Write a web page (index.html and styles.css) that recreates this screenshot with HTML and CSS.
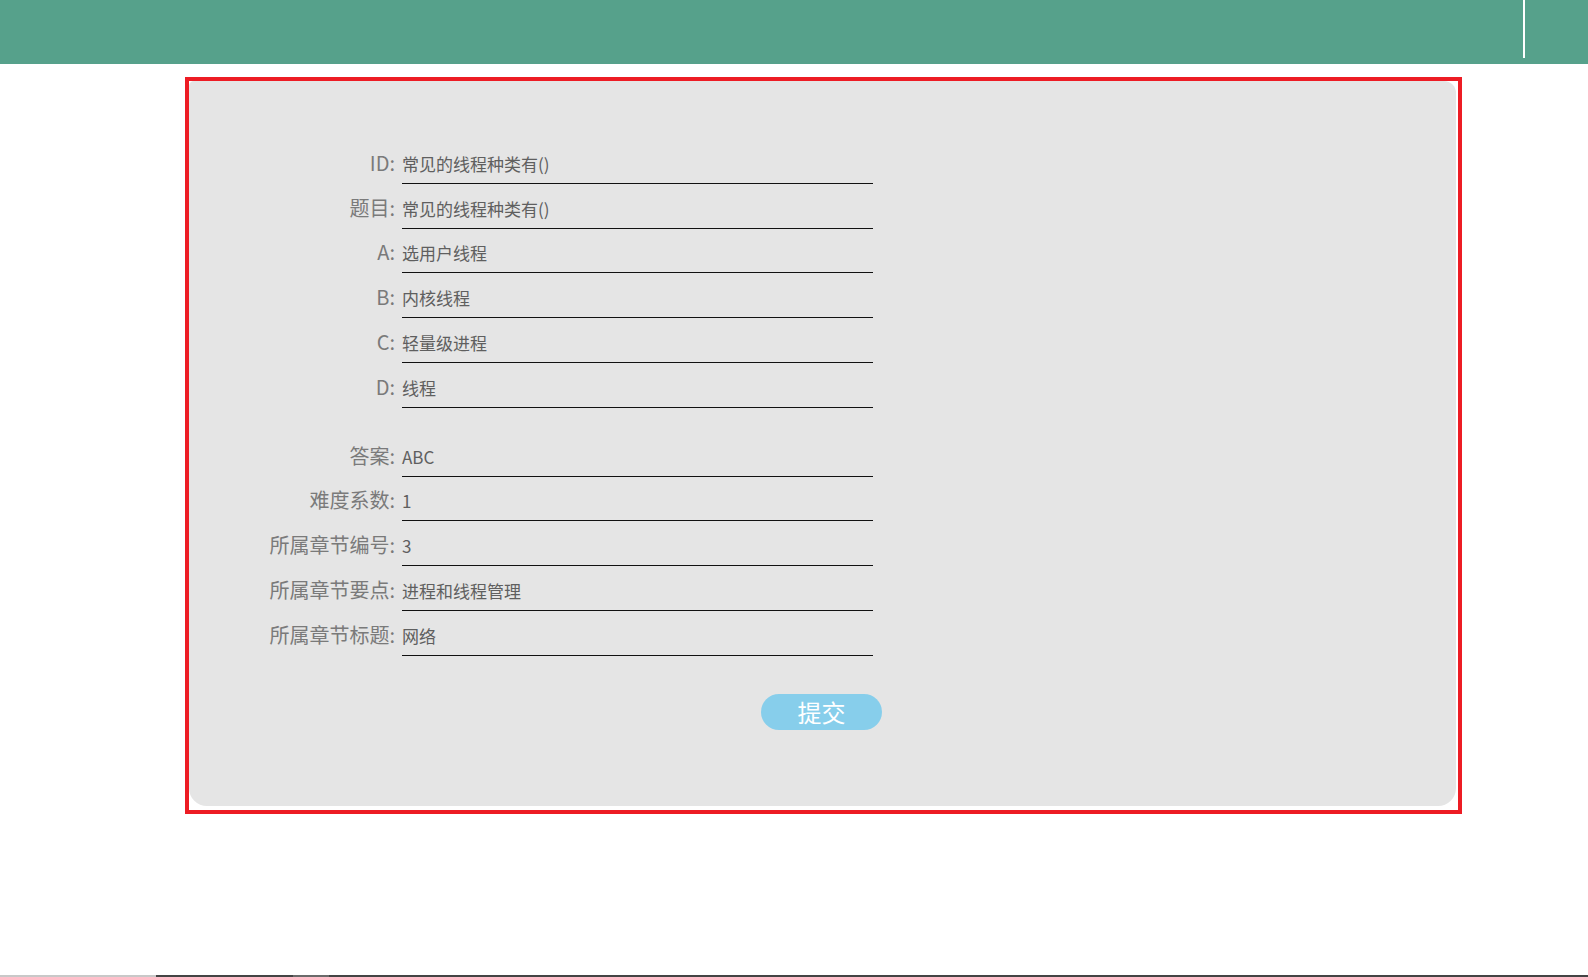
FILE: index.html
```html
<!DOCTYPE html>
<html lang="zh-CN">
<head>
<meta charset="utf-8">
<title>题目编辑</title>
<link rel="stylesheet" href="styles.css">
</head>
<body>
<header class="topbar">
  <div class="topbar-divider"></div>
</header>
<main class="main">
  <div class="frame">
    <form class="panel">
      <div class="group">
        <div class="row"><span class="label">ID:</span><div class="field">常见的线程种类有()</div></div>
        <div class="row"><span class="label">题目:</span><div class="field">常见的线程种类有()</div></div>
        <div class="row"><span class="label">A:</span><div class="field">选用户线程</div></div>
        <div class="row"><span class="label">B:</span><div class="field">内核线程</div></div>
        <div class="row"><span class="label">C:</span><div class="field">轻量级进程</div></div>
        <div class="row"><span class="label">D:</span><div class="field">线程</div></div>
      </div>
      <div class="group group-second">
        <div class="row"><span class="label">答案:</span><div class="field">ABC</div></div>
        <div class="row"><span class="label">难度系数:</span><div class="field">1</div></div>
        <div class="row"><span class="label">所属章节编号:</span><div class="field">3</div></div>
        <div class="row"><span class="label">所属章节要点:</span><div class="field">进程和线程管理</div></div>
        <div class="row"><span class="label">所属章节标题:</span><div class="field">网络</div></div>
      </div>
      <div class="actions">
        <button type="button" class="submit">提交</button>
      </div>
    </form>
  </div>
</main>
<footer class="bottom-strip">
  <div class="strip-light"></div>
  <div class="strip-dark"></div>
  <div class="strip-mid"></div>
  <div class="strip-dark strip-fill"></div>
</footer>
</body>
</html>
```
FILE: styles.css
```css
html, body {
  margin: 0;
  padding: 0;
}
body {
  background: #ffffff;
  font-family: "Noto Sans CJK SC", "Noto Sans", sans-serif;
  display: flex;
  flex-direction: column;
  min-height: 100vh;
}
.topbar {
  height: 64px;
  background: #56a18b;
  display: flex;
  justify-content: flex-end;
}
.topbar-divider {
  width: 2px;
  height: 58px;
  background: #ffffff;
  margin-right: 63px;
}
.main {
  padding: 13px 0 0 185px;
}
.frame {
  width: 1267px;
  border: 4px solid #ed1c24;
  padding: 0 2px 4px 0;
  background: #ffffff;
}
.panel {
  background: #e5e5e5;
  height: 725px;
  box-sizing: border-box;
  border-radius: 5px 12px 18px 18px;
  padding: 58px 0 0 56px;
  display: flex;
  flex-direction: column;
}
.group {
  display: flex;
  flex-direction: column;
}
.group-second {
  margin-top: 24px;
}
.row {
  display: flex;
  align-items: flex-end;
  height: 44.8px;
  box-sizing: border-box;
}
.label {
  width: 150px;
  text-align: right;
  font-size: 20px;
  line-height: 20px;
  color: #7a7a7a;
  margin-bottom: 11px;
  margin-right: 7px;
  white-space: nowrap;
}
.field {
  width: 471px;
  border-bottom: 1px solid #111111;
  font-size: 17px;
  line-height: 17px;
  padding-bottom: 11px;
  color: #5f5f5f;
  white-space: nowrap;
}
.actions {
  display: flex;
  padding: 38px 0 0 516px;
}
.submit {
  width: 121px;
  height: 36px;
  border: none;
  border-radius: 18px;
  background: #87ceeb;
  color: #ffffff;
  font-family: "Noto Sans CJK SC", "Noto Sans", sans-serif;
  font-size: 24px;
  line-height: 36px;
  padding: 0;
}
.bottom-strip {
  margin-top: auto;
  height: 2px;
  display: flex;
}
.strip-light {
  width: 156px;
  background: #c8c8c8;
}
.strip-dark {
  width: 137px;
  background: #444444;
}
.strip-mid {
  width: 36px;
  background: #6a6a6a;
}
.strip-fill {
  flex: 1;
}
```
